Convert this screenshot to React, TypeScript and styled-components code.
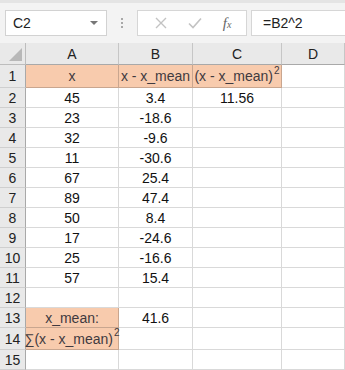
import { Fragment, type ReactNode } from 'react';
import styled, { createGlobalStyle } from 'styled-components';

const GlobalStyle = createGlobalStyle`
  html, body {
    margin: 0;
    padding: 0;
    background: #ffffff;
    overflow: hidden;
  }
  body {
    font-family: 'Liberation Sans', Arial, sans-serif;
  }
`;

const columns = ['A', 'B', 'C', 'D'];

type Row = {
  cells: ReactNode[];
  fill?: boolean[];
  height: number;
};

const Sq = () => <Sup>2</Sup>;

const rows: Row[] = [
  {
    cells: ['x', 'x - x_mean', <>(x - x_mean)<Sq /></>, ''],
    fill: [true, true, true, false],
    height: 23,
  },
  { cells: ['45', '3.4', '11.56', ''], height: 20 },
  { cells: ['23', '-18.6', '', ''], height: 20 },
  { cells: ['32', '-9.6', '', ''], height: 20 },
  { cells: ['11', '-30.6', '', ''], height: 20 },
  { cells: ['67', '25.4', '', ''], height: 20 },
  { cells: ['89', '47.4', '', ''], height: 20 },
  { cells: ['50', '8.4', '', ''], height: 20 },
  { cells: ['17', '-24.6', '', ''], height: 20 },
  { cells: ['25', '-16.6', '', ''], height: 20 },
  { cells: ['57', '15.4', '', ''], height: 20 },
  { cells: ['', '', '', ''], height: 20 },
  { cells: ['x_mean:', '41.6', '', ''], fill: [true, false, false, false], height: 20 },
  {
    cells: [<>∑(x - x_mean)<Sq /></>, '', '', ''],
    fill: [true, false, false, false],
    height: 22,
  },
  { cells: ['', '', '', ''], height: 20 },
];

export default function App() {
  return (
    <Page>
      <GlobalStyle />
      <Toolbar>
        <NameBox>
          <span>C2</span>
          <DropArrow />
        </NameBox>
        <Grip>
          <i />
          <i />
          <i />
        </Grip>
        <ButtonGroup>
          <svg width="12" height="12" viewBox="0 0 12 12">
            <path d="M1 1 L11 11 M11 1 L1 11" stroke="#c3c3c3" strokeWidth="1.4" />
          </svg>
          <svg width="14" height="12" viewBox="0 0 14 12">
            <path d="M1 6.5 L5 10.5 L13 1.5" stroke="#c3c3c3" strokeWidth="1.6" fill="none" />
          </svg>
          <Fx>
            f<small>x</small>
          </Fx>
        </ButtonGroup>
        <FormulaBar>=B2^2</FormulaBar>
      </Toolbar>
      <Sheet $rows={rows.map((r) => r.height)}>
        <Corner>
          <CornerTriangle />
        </Corner>
        {columns.map((c) => (
          <ColHeader key={c}>{c}</ColHeader>
        ))}
        {rows.map((row, i) => (
          <Fragment key={i}>
            <RowHeader>{i + 1}</RowHeader>
            {row.cells.map((cell, j) => (
              <Cell key={j} $fill={row.fill?.[j]}>
                {cell}
              </Cell>
            ))}
          </Fragment>
        ))}
      </Sheet>
    </Page>
  );
}

const Page = styled.div`
  width: 345px;
  height: 370px;
  overflow: hidden;
  background: #ffffff;
`;

const Toolbar = styled.div`
  height: 43px;
  box-sizing: border-box;
  background: #f3f3f3;
  border-top: 3px solid #e4e4e4;
  padding: 7px 0 0 5px;
  display: flex;
  align-items: flex-start;
`;

const NameBox = styled.div`
  width: 102px;
  height: 26px;
  box-sizing: border-box;
  background: #ffffff;
  border: 1px solid #d2d2d2;
  display: flex;
  align-items: center;
  justify-content: space-between;
  padding: 0 8px 0 7px;
  font-size: 14px;
  color: #222;
`;

const DropArrow = styled.span`
  width: 0;
  height: 0;
  border-left: 4px solid transparent;
  border-right: 4px solid transparent;
  border-top: 4px solid #777;
`;

const Grip = styled.div`
  width: 30px;
  height: 26px;
  display: flex;
  flex-direction: column;
  align-items: center;
  justify-content: center;
  gap: 2px;
  i {
    width: 2px;
    height: 2px;
    background: #a8a8a8;
  }
`;

const ButtonGroup = styled.div`
  width: 110px;
  height: 26px;
  box-sizing: border-box;
  background: #ffffff;
  border: 1px solid #d6d6d6;
  display: flex;
  align-items: center;
  justify-content: space-around;
  padding: 0 4px 0 6px;
`;

const Fx = styled.span`
  font-family: 'Liberation Serif', 'Times New Roman', serif;
  font-style: italic;
  font-size: 15px;
  color: #666;
  small {
    font-size: 10px;
  }
`;

const FormulaBar = styled.div`
  flex: 1;
  height: 26px;
  box-sizing: border-box;
  margin-left: 4px;
  background: #ffffff;
  border: 1px solid #d6d6d6;
  border-right: none;
  display: flex;
  align-items: center;
  padding-left: 11px;
  font-size: 14px;
  color: #222;
`;

const Sheet = styled.div<{ $rows: number[] }>`
  display: grid;
  grid-template-columns: 26px 93px 74px 89px 1fr;
  grid-template-rows: 22px ${({ $rows }) => $rows.map((h) => `${h}px`).join(' ')};
  font-size: 14px;
`;

const headerBase = `
  box-sizing: border-box;
  background: #e9e9e9;
  display: flex;
  align-items: center;
  justify-content: center;
  color: #222;
`;

const Corner = styled.div`
  ${headerBase}
  border-right: 1px solid #bdbdbd;
  border-bottom: 1px solid #bdbdbd;
  position: relative;
`;

const CornerTriangle = styled.span`
  position: absolute;
  right: 3px;
  bottom: 3px;
  width: 0;
  height: 0;
  border-left: 13px solid transparent;
  border-bottom: 13px solid #b8b8b8;
`;

const ColHeader = styled.div`
  ${headerBase}
  border-right: 1px solid #c6c6c6;
  border-bottom: 1px solid #a9a9a9;
  padding-top: 1px;
`;

const RowHeader = styled.div`
  ${headerBase}
  border-right: 1px solid #a9a9a9;
  border-bottom: 1px solid #cfcfcf;
`;

const Cell = styled.div<{ $fill?: boolean }>`
  box-sizing: border-box;
  background: ${({ $fill }) => ($fill ? '#f8cbad' : '#ffffff')};
  border-right: 1px solid ${({ $fill }) => ($fill ? '#c9a68f' : '#d9d9d9')};
  border-bottom: 1px solid ${({ $fill }) => ($fill ? '#c9a68f' : '#d9d9d9')};
  display: flex;
  align-items: center;
  justify-content: center;
  white-space: nowrap;
  overflow: visible;
  color: ${({ $fill }) => ($fill ? '#3f3a40' : '#111')};
`;

const Sup = styled.span`
  font-size: 10px;
  position: relative;
  top: -6px;
  margin-left: 1px;
`;
